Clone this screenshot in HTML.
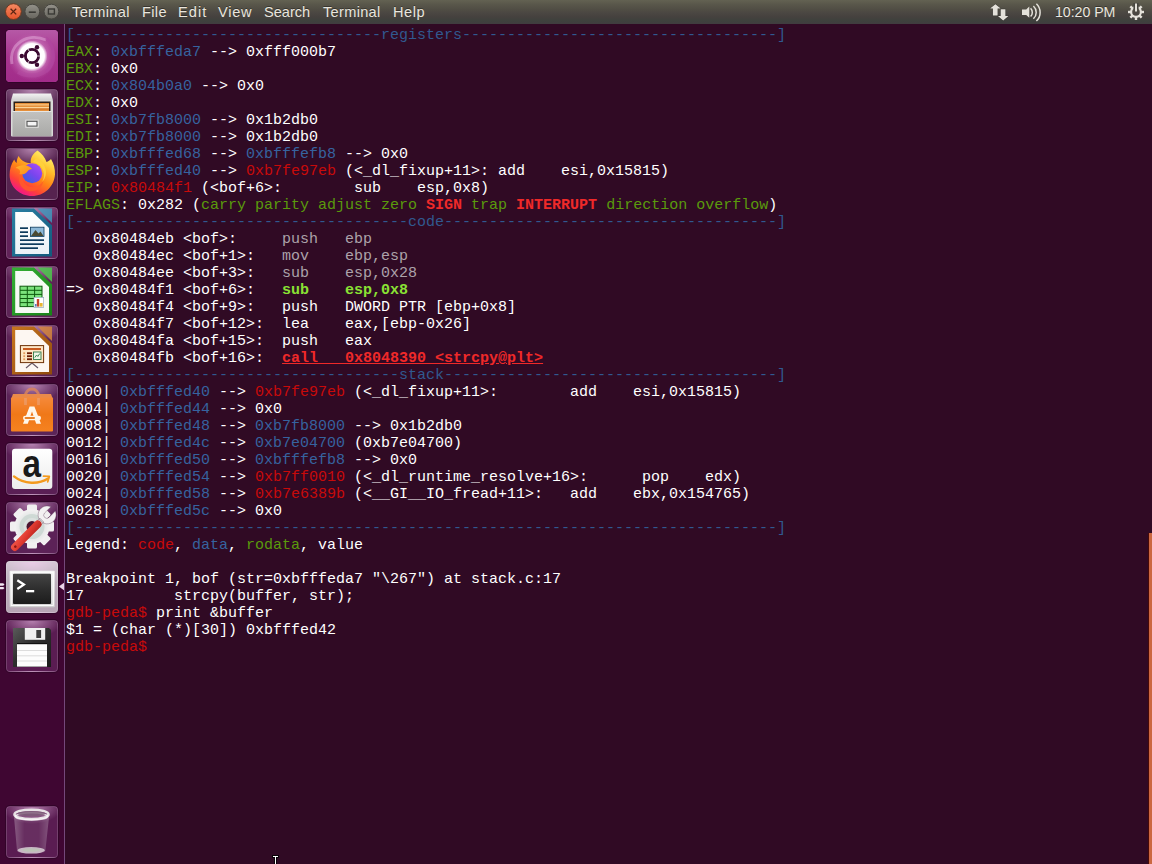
<!DOCTYPE html>
<html lang="en">
<head>
<meta charset="utf-8">
<title>Terminal</title>
<style>
*{box-sizing:border-box;margin:0;padding:0}
html,body{width:1152px;height:864px;overflow:hidden;background:#300a24}
body{position:relative;font-family:"Liberation Sans",sans-serif}
#panel{position:absolute;left:0;top:0;width:1152px;height:24px;background:linear-gradient(#636252 0%,#58564a 20%,#504d44 40%,#4a4642 55%,#45413e 70%,#3e413d 86%,#403c3f 100%);z-index:5}
#panel .m{position:absolute;top:3px;height:18px;line-height:18px;font-size:14.6px;color:#e9e6df;white-space:pre;text-shadow:0 -1px 0 rgba(0,0,0,.35)}
.wb{position:absolute;top:4px;width:16px;height:16px;border-radius:50%;border:1px solid #33322d}
#launcher{position:absolute;left:0;top:24px;width:65px;height:840px;background:#3f0632;border-right:1px solid #74487a;z-index:4}
.ic{position:absolute;left:6px;width:52px;height:52px;border-radius:4px;overflow:hidden;background:#5a2352;box-shadow:0 0 0 1px rgba(40,4,34,.55)}
.ic:before{content:"";position:absolute;left:0;top:0;right:0;bottom:0;border-radius:4px;border:1px solid rgba(255,255,255,.16);background:radial-gradient(ellipse 60% 34% at 50% 0,rgba(255,210,250,.55),rgba(255,210,250,0) 100%);z-index:0}
.ic svg{position:absolute;left:0;top:0;width:52px;height:52px;z-index:1}
#term{position:absolute;left:65px;top:24px;width:1087px;height:840px;background:#300a24;overflow:hidden}
#tx{position:absolute;left:1px;top:3px;font-family:"Liberation Mono",monospace;font-size:15px;line-height:17px;color:#fff;white-space:pre;tab-size:8;-moz-tab-size:8}
.b{color:#36639f}.g{color:#5a9a0c}.r{color:#c80a0a}.R{color:#ef2929;font-weight:bold}.G{color:#8ae234;font-weight:bold}.d{color:#aca2aa}
.u{text-decoration:underline}.s{color:#30598f}
#sb{position:absolute;left:1149px;top:533px;width:3px;height:331px;background:#cb6841;box-shadow:-1px 0 0 #470a08;z-index:6}
</style>
</head>
<body>
<div id="panel">
<svg width="66" height="24" style="position:absolute;left:0;top:0" viewBox="0 0 66 24">
<defs>
<linearGradient id="gc" x1="0" y1="0" x2="0" y2="1"><stop offset="0" stop-color="#f68a63"/><stop offset="1" stop-color="#e4532a"/></linearGradient>
<linearGradient id="gm" x1="0" y1="0" x2="0" y2="1"><stop offset="0" stop-color="#94928a"/><stop offset="1" stop-color="#67655e"/></linearGradient>
</defs>
<circle cx="13.4" cy="11.6" r="7.9" fill="url(#gc)" stroke="#6b3a22" stroke-width="1"/>
<path d="M10.6 8.8l5.6 5.6M16.2 8.8l-5.6 5.6" stroke="#5a2412" stroke-width="1.3" fill="none"/>
<circle cx="32.3" cy="11.6" r="7.4" fill="url(#gm)" stroke="#46453f" stroke-width="1"/>
<path d="M28.8 12.2h7" stroke="#3a3935" stroke-width="1.6" fill="none"/>
<circle cx="51.4" cy="11.6" r="7.4" fill="url(#gm)" stroke="#46453f" stroke-width="1"/>
<rect x="48.4" y="9" width="6" height="5" fill="none" stroke="#3a3935" stroke-width="1.4"/>
</svg>
<span class="m" style="left:72px;letter-spacing:.33px">Terminal</span>
<span class="m" style="left:142px;letter-spacing:.35px">File</span>
<span class="m" style="left:178px;letter-spacing:1.05px">Edit</span>
<span class="m" style="left:218px;letter-spacing:.75px">View</span>
<span class="m" style="left:264px">Search</span>
<span class="m" style="left:323px;letter-spacing:.3px">Terminal</span>
<span class="m" style="left:393px;letter-spacing:.5px">Help</span>
<svg width="172" height="24" style="position:absolute;left:980px;top:0" viewBox="980 0 172 24" fill="#e4e1da">
<path d="M995.400 4.200l5.300 4.300h-3.100v7.100h-4.700V8.500h-2.800z" stroke="#34332e" stroke-width=".8" paint-order="stroke"/>
<path d="M1003.200 20.600l-5.300-4.500h2.800V9.200h4.700v6.900h3z" stroke="#34332e" stroke-width=".8" paint-order="stroke"/>
<path d="M1022 9.400h4.200l3.100-3v11.400l-3.100-2.800H1022z"/>
<path d="M1030.600 8.200a6 6 0 0 1 0 8.400M1033.400 6a8.700 8.700 0 0 1 0 12.800M1036.400 3.800a11.800 11.800 0 0 1 0 17.200" fill="none" stroke="#e4e1da" stroke-width="1.500"/>
<g transform="translate(1136 12)">
<circle r="4.900" fill="none" stroke="#e4e1da" stroke-width="2.200"/>
<g stroke="#e4e1da" stroke-width="2.400"><path d="M0 -8v3" transform="rotate(45)"/><path d="M0 -8v3" transform="rotate(90)"/><path d="M0 -8v3" transform="rotate(135)"/><path d="M0 -8v3" transform="rotate(180)"/><path d="M0 -8v3" transform="rotate(225)"/><path d="M0 -8v3" transform="rotate(270)"/><path d="M0 -8v3" transform="rotate(315)"/></g>
<rect x="-2.600" y="-9" width="5.200" height="6" fill="#46453f"/>
<rect x="-1" y="-8.500" width="2" height="8" fill="#e4e1da"/>
</g>
</svg>
<span class="m" style="left:1055px;font-size:14.2px;letter-spacing:-.05px">10:20 PM</span>
</div>
<div id="launcher">
<div class="ic" style="top:6px;background:#9c2f86" id="i1"><svg viewBox="0 0 52 52">
<defs><linearGradient id="d0" x1="0" y1="0" x2="0" y2="1"><stop offset="0" stop-color="#b659a6"/><stop offset=".5" stop-color="#a8358f"/><stop offset="1" stop-color="#a22c8a"/></linearGradient>
<radialGradient id="d1" cx="50%" cy="50%" r="50%"><stop offset="0" stop-color="#f0c4e8" stop-opacity=".9"/><stop offset=".6" stop-color="#d88fcb" stop-opacity=".55"/><stop offset="1" stop-color="#c060ae" stop-opacity="0"/></radialGradient>
<radialGradient id="d2"><stop offset="0" stop-color="#fff"/><stop offset=".8" stop-color="#fff"/><stop offset="1" stop-color="#fff" stop-opacity="0"/></radialGradient></defs>
<rect width="52" height="52" fill="url(#d0)"/>
<circle cx="26" cy="27" r="24" fill="url(#d1)"/>
<path d="M6 34C2 14 22 2 40 10" fill="none" stroke="#e9b6df" stroke-width="3" opacity=".45"/>
<path d="M46 20C52 40 30 52 12 42" fill="none" stroke="#b54aa2" stroke-width="4" opacity=".55"/>
<path d="M40 8C50 16 50 34 40 42" fill="none" stroke="#b044a0" stroke-width="3" opacity=".5"/>
<circle cx="26" cy="26" r="15.500" fill="url(#d2)"/>
<circle cx="26" cy="26" r="6.600" fill="none" stroke="#3b0a31" stroke-width="2.900"/>
<g stroke="#fff" stroke-width=".8"><path d="M26 26L36 26M26 26L21 17.300M26 26L21 34.700"/></g>
<circle cx="26" cy="26" r="4.900" fill="#fff"/>
<circle cx="31" cy="17.200" r="2.200" fill="#3b0a31"/><circle cx="15.800" cy="26" r="2.200" fill="#3b0a31"/><circle cx="31" cy="34.800" r="2.200" fill="#3b0a31"/>
</svg></div>
<div class="ic" style="top:65px;background:#5e2f59"><svg viewBox="0 0 52 52">
<defs><linearGradient id="f1" x1="0" y1="0" x2="0" y2="1"><stop offset="0" stop-color="#c2c2c0"/><stop offset="1" stop-color="#a9a9a7"/></linearGradient>
<linearGradient id="f2" x1="0" y1="0" x2="0" y2="1"><stop offset="0" stop-color="#f4f4f4"/><stop offset="1" stop-color="#cfcfcf"/></linearGradient></defs>
<path d="M7 4.500h38l2 7H5z" fill="url(#f2)"/>
<rect x="5" y="11" width="42" height="36.500" rx="1" fill="#d9d9d8"/>
<rect x="7.500" y="12.500" width="37" height="10" fill="#2d2018"/>
<rect x="9" y="14" width="34" height="8.500" fill="#e58f3a"/>
<rect x="9" y="15.200" width="34" height="1.300" fill="#f8c27e"/><rect x="9" y="18" width="34" height="1.500" fill="#fbd59b"/><rect x="9" y="19.500" width="34" height="1" fill="#c96a1d"/>
<rect x="6.500" y="22" width="39" height="25" fill="url(#f1)"/>
<rect x="6.500" y="22" width="39" height="1" fill="#e6e6e4"/>
<rect x="19" y="30.500" width="14" height="8.400" rx="1" fill="#d6d6d4"/>
<rect x="21" y="32.300" width="10" height="4.800" fill="#f4f4f4" stroke="#4a4a4a" stroke-width="1"/>
</svg></div>
<div class="ic" style="top:124px;background:#56234f"><svg viewBox="0 0 52 52">
<defs><linearGradient id="x1" x1=".85" y1=".08" x2=".3" y2=".98"><stop offset="0" stop-color="#fff36b"/><stop offset=".28" stop-color="#ffc02e"/><stop offset=".55" stop-color="#ff8416"/><stop offset=".8" stop-color="#ff4138"/><stop offset="1" stop-color="#f0168a"/></linearGradient>
<linearGradient id="x2" x1=".8" y1=".1" x2=".2" y2=".9"><stop offset="0" stop-color="#a24cf5"/><stop offset=".5" stop-color="#7a45ee"/><stop offset="1" stop-color="#3b5fe3"/></linearGradient>
<linearGradient id="x3" x1="0" y1="0" x2="1" y2="1"><stop offset="0" stop-color="#ffb42a"/><stop offset="1" stop-color="#ff8a1a"/></linearGradient></defs>
<path d="M31.500 2.400C36 5.500 39 9.500 40.500 14c1.800-.8 3.200-1.600 4.500-3 3 5 4.200 10 4 15.500C48 39 38 48 26 48S3.600 39 3.600 27c0-6 1.600-11 4.600-15.500 .6 1.600 1.400 2.600 2.400 3.400C10.800 12 11.400 10 12.600 8c1.400 2.600 3 4.200 5.400 5.400 2 1 4.200 1.600 6.800 1.800C24 10 27 5.500 31.500 2.400z" fill="url(#x1)"/>
<circle cx="26.200" cy="25.200" r="10" fill="url(#x2)"/>
<path d="M9.500 20c3-2.600 7-3.200 10.500-2.600 2.600.5 4.500 1.800 6 3.600-2 .2-3.600 1-4.600 2.400-1.800 2.400-4.800 3.400-8 2.600 1-1.400 1-2.800.2-4-1-1.200-2.400-1.800-4.100-2z" fill="url(#x3)"/>
<path d="M16.500 27.500c-1 5 2.500 10.500 8.500 11.500 5.500.8 10.500-2 12.500-7-1 8-8 12.500-15 11-7-1.600-11-8-9-15.500z" fill="#ff5a2a" opacity=".85"/>
<path d="M27 14c5 1 9 4.500 10.500 9.500 1 4 .4 7.500-1.500 10.500 4-4 5-10 3-15-1.600-4-5-7-9-8.500-1.200 1-2.200 2.200-3 3.500z" fill="#ffd23c" opacity=".9"/>
</svg></div>
<div class="ic" style="top:183px;background:#612258"><svg viewBox="0 0 52 52">
<defs><linearGradient id="w1" x1="0" y1="0" x2="1" y2="1"><stop offset="0" stop-color="#2b7fa3"/><stop offset="1" stop-color="#125a7c"/></linearGradient>
<linearGradient id="pg" x1="0" y1="0" x2="0" y2="1"><stop offset="0" stop-color="#fff"/><stop offset="1" stop-color="#eaf1f6"/></linearGradient></defs>
<path d="M6 1.500h22L46 18.500V49.500H6z" fill="url(#w1)"/>
<path d="M31.500 1.500H46V16z" fill="#3f9cc0" opacity=".8"/>
<path d="M9.200 5h17.300L43 21V47H9.200z" fill="url(#pg)"/>
<g fill="#0c3a5c"><rect x="14" y="20.300" width="8" height="1.700"/><rect x="14" y="24.300" width="8" height="1.700"/><rect x="14" y="28.300" width="8" height="1.700"/><rect x="14" y="32.300" width="24" height="1.700"/><rect x="14" y="36.300" width="24" height="1.700"/><rect x="14" y="40.300" width="18" height="1.700"/></g>
<rect x="24.400" y="20.200" width="13.600" height="9.300" fill="#8db9d8" stroke="#0c3a5c" stroke-width=".8"/>
<path d="M25 29l4.500-6 3 3.500 2-2 3 4.500z" fill="#4a4a32"/>
</svg></div>
<div class="ic" style="top:242px;background:#5d2456"><svg viewBox="0 0 52 52">
<defs><linearGradient id="c1" x1="0" y1="0" x2="1" y2="1"><stop offset="0" stop-color="#35b035"/><stop offset="1" stop-color="#178317"/></linearGradient></defs>
<path d="M6 1.500h22L46 18.500V49.500H6z" fill="url(#c1)"/>
<path d="M31.500 1.500H46V16z" fill="#4cc84c" opacity=".85"/>
<path d="M9.200 5h17.300L43 21V47H9.200z" fill="#f6fbf4"/>
<rect x="14" y="20.200" width="22" height="20.400" fill="#7be27b" stroke="#0e5a0e" stroke-width="1"/>
<path d="M14 24.300h22M14 28.400h22M14 32.500h22M14 36.600h22M21.300 20.200v20.400M28.600 20.200v20.400" stroke="#0e5a0e" stroke-width="1" fill="none"/>
<rect x="28" y="31.300" width="9.700" height="10" fill="#fff" stroke="#8aa0b8" stroke-width=".6"/>
<rect x="30.800" y="33" width="2.400" height="7.600" fill="#c8452a"/><rect x="33.600" y="37" width="3" height="3.600" fill="#e6b530"/><rect x="29" y="38" width="1.600" height="2.600" fill="#5a7ab8"/>
</svg></div>
<div class="ic" style="top:301px;background:#5d2456"><svg viewBox="0 0 52 52">
<defs><linearGradient id="p1" x1="0" y1="0" x2="1" y2="1"><stop offset="0" stop-color="#c8761f"/><stop offset="1" stop-color="#8f4a0c"/></linearGradient></defs>
<path d="M6 1.500h22L46 18.500V49.500H6z" fill="url(#p1)"/>
<path d="M31.500 1.500H46V16z" fill="#d98a3a" opacity=".8"/>
<path d="M9.200 5h17.300L43 21V47H9.200z" fill="#fdf7f2"/>
<path d="M26 38l-6 5M26 38l6 5" stroke="#6a5a66" stroke-width="1.200" fill="none"/>
<rect x="14.400" y="20.600" width="23.200" height="17" fill="#fde6c6" stroke="#6e3208" stroke-width="1"/>
<rect x="17" y="23" width="18" height="2" fill="#c85a1e"/>
<g fill="#6e1e06"><rect x="21" y="27.300" width="5" height="1.800"/><rect x="21" y="30.300" width="5" height="1.800"/><rect x="21" y="33.300" width="5" height="1.800"/></g>
<g fill="#e39a5a"><rect x="17.300" y="27.300" width="1.800" height="1.800"/><rect x="17.300" y="30.300" width="1.800" height="1.800"/><rect x="17.300" y="33.300" width="1.800" height="1.800"/></g>
<rect x="27.500" y="27" width="7.500" height="7.500" fill="#eef6e6" stroke="#2f7a4a" stroke-width=".9"/>
<path d="M28.800 32.500l1.800-2.500 1.200 1.500 2-3" stroke="#2f7a4a" stroke-width=".9" fill="none"/>
</svg></div>
<div class="ic" style="top:360px;background:#5b2458"><svg viewBox="0 0 52 52">
<defs><linearGradient id="s1" x1="0" y1="0" x2="0" y2="1"><stop offset="0" stop-color="#f5893a"/><stop offset=".5" stop-color="#f07818"/><stop offset="1" stop-color="#f58220"/></linearGradient></defs>
<path d="M19.500 16V11.500a6.500 6.500 0 0 1 13 0v4.500" fill="none" stroke="#d8845e" stroke-width="2.800" opacity=".85"/>
<path d="M7 10h38l1.500 4h-41z" fill="#e98a4a"/>
<rect x="5" y="13.500" width="42" height="34" rx="1" fill="url(#s1)"/>
<path d="M19.500 21v-7M32.500 21v-7" stroke="#eaa47c" stroke-width="2.800" opacity=".6"/>
<path d="M17 39.800L23.600 22.400h4.800L35 39.800h-4.800L26 27.500 21.800 39.800z" fill="#fff7ea"/>
<rect x="17" y="31.800" width="18" height="4.400" rx="2.200" fill="#fff7ea"/>
<rect x="18.600" y="33.100" width="10.400" height="1.900" rx=".9" fill="#e8842c"/>
</svg></div>
<div class="ic" style="top:419px;background:#5a1f55"><svg viewBox="0 0 52 52">
<defs><linearGradient id="a1" x1="0" y1="0" x2="0" y2="1"><stop offset="0" stop-color="#ffffff"/><stop offset="1" stop-color="#ececec"/></linearGradient></defs>
<rect x="6" y="5.700" width="40.300" height="40.400" rx="3" fill="url(#a1)"/>
<text x="25.800" y="33.700" text-anchor="middle" font-family="Liberation Sans,sans-serif" font-weight="bold" font-size="39.500" fill="#1a1a1a" textLength="18.500" lengthAdjust="spacingAndGlyphs">a</text>
<path d="M8 33.400C18 41.500 33 41.500 42 35.500" fill="none" stroke="#f39a1e" stroke-width="2.400" stroke-linecap="round"/>
<path d="M37.500 33.200l5.800.2-1.600 5.400" fill="none" stroke="#f39a1e" stroke-width="1.800" stroke-linecap="round" stroke-linejoin="round"/>
</svg></div>
<div class="ic" style="top:478px;background:#5c2257"><svg viewBox="0 0 52 52">
<defs><radialGradient id="g1" cx=".5" cy=".5" r=".5"><stop offset="0" stop-color="#cfdad6"/><stop offset=".55" stop-color="#dfe3e2"/><stop offset="1" stop-color="#f4f2f3"/></radialGradient>
<linearGradient id="g2" x1="0" y1="0" x2="1" y2="1"><stop offset="0" stop-color="#f0574a"/><stop offset=".5" stop-color="#e03a30"/><stop offset="1" stop-color="#b8241e"/></linearGradient></defs>
<g transform="translate(26 24.600)"><g fill="#f1eff0">
<rect x="-5" y="-22" width="10" height="44" rx="1.500"/><rect x="-5" y="-22" width="10" height="44" rx="1.500" transform="rotate(45)"/><rect x="-5" y="-22" width="10" height="44" rx="1.500" transform="rotate(90)"/><rect x="-5" y="-22" width="10" height="44" rx="1.500" transform="rotate(135)"/></g>
<circle r="17.500" fill="url(#g1)"/><circle r="10.500" fill="none" stroke="#c9d6d1" stroke-width="4" opacity=".8"/><circle r="5.500" fill="#4a1430"/></g>
<g transform="rotate(-45 21 33)">
<path d="M57.9 29.9A9 9 0 1 0 57.9 36.1L49.0 36.1A3.1 3.1 0 0 1 49.0 29.9ZM36 30.200h6v5.600h-6z" fill="#f3f1f2" stroke="#6a4a62" stroke-width=".7" stroke-opacity=".55"/>
<rect x="0" y="29.200" width="40" height="7.600" rx="3.800" fill="url(#g2)"/><circle cx="4.500" cy="33" r="1.300" fill="#8a1510"/></g>
</svg></div>
<div class="ic" style="top:537px;background:linear-gradient(#d0c6d0,#bcaebb 45%,#b7a5b5)"><svg viewBox="0 0 52 52">
<defs><linearGradient id="t1" x1="0" y1="0" x2="0" y2="1"><stop offset="0" stop-color="#454545"/><stop offset=".5" stop-color="#2e2e2e"/><stop offset="1" stop-color="#1c1c1c"/></linearGradient>
<linearGradient id="t2" x1="0" y1="0" x2="0" y2="1"><stop offset="0" stop-color="#f2f2f2"/><stop offset="1" stop-color="#cfcfcf"/></linearGradient></defs>
<rect x="3.600" y="9.800" width="45.200" height="36.400" rx="1" fill="url(#t2)"/>
<rect x="5.200" y="11.200" width="42" height="33.200" fill="none" stroke="#fff" stroke-width="1"/>
<rect x="7" y="12.800" width="38" height="30.200" rx="1" fill="url(#t1)"/>
<path d="M11.300 19.200l6.600 4.400-6.600 4.400" fill="none" stroke="#fff" stroke-width="2.300"/>
<rect x="20" y="29" width="8.200" height="2.300" fill="#fff"/>
</svg></div>
<svg width="66" height="20" viewBox="0 0 66 20" style="position:absolute;left:0;top:553px">
<path d="M0 6.300h3.200l1.300 1.200-1.300 1.200H0zM0 9.900h3.200l1.300 1.200-1.300 1.200H0z" fill="#f3e6f2"/>
<path d="M64 5.700v7.600L58.800 9.500z" fill="#e9d3e6"/>
</svg>
<div class="ic" style="top:596px;background:#5a1c52"><svg viewBox="0 0 52 52">
<defs><linearGradient id="y1" x1="0" y1="0" x2="1" y2="1"><stop offset="0" stop-color="#5a5a5a"/><stop offset=".45" stop-color="#2e2e2e"/><stop offset="1" stop-color="#1a1a1a"/></linearGradient></defs>
<path d="M7 8h36l2 2v37H7z" fill="url(#y1)"/>
<rect x="18.800" y="8" width="20.400" height="11.800" fill="#efefef"/>
<rect x="30.300" y="10" width="4.800" height="8" fill="#3c3c3c"/>
<rect x="11" y="23.900" width="30" height="22.700" fill="#fdfdfd"/>
<rect x="11" y="23" width="30" height="1.200" fill="#111"/>
<path d="M11 30.500h30M11 35.800h30M11 41h30" stroke="#d4d4d4" stroke-width=".8"/>
</svg></div>
<div class="ic" style="top:782px;background:#5a1c52"><svg viewBox="0 0 52 52">
<defs><linearGradient id="r1" x1="0" y1="0" x2="1" y2="0"><stop offset="0" stop-color="#fff" stop-opacity=".28"/><stop offset=".3" stop-color="#fff" stop-opacity=".08"/><stop offset=".7" stop-color="#fff" stop-opacity=".08"/><stop offset="1" stop-color="#fff" stop-opacity=".25"/></linearGradient></defs>
<path d="M7.800 8.400L11 44.400a14.200 3.500 0 0 0 28.400 0L43.300 8.400z" fill="url(#r1)"/>
<ellipse cx="25.200" cy="44.300" rx="13.600" ry="3.300" fill="#d9cfd6" opacity=".85"/>
<ellipse cx="25.200" cy="44" rx="9" ry="1.800" fill="#b9c8b4" opacity=".7"/>
<ellipse cx="25.500" cy="8.400" rx="17" ry="4.700" fill="none" stroke="#e8e2e6" stroke-width="2.600"/>
<ellipse cx="25.500" cy="10.400" rx="16" ry="3.600" fill="none" stroke="#fff" stroke-width="1.600" opacity=".7"/>
<ellipse cx="25.500" cy="7.600" rx="14" ry="2.600" fill="#7a5a76" opacity=".8"/>
</svg></div>
</div>
<div id="term"><div id="tx"><span class="s">[----------------------------------registers-----------------------------------]</span>
<span class="g">EAX</span>: <span class="b">0xbfffeda7</span> --&gt; 0xfff000b7
<span class="g">EBX</span>: 0x0
<span class="g">ECX</span>: <span class="b">0x804b0a0</span> --&gt; 0x0
<span class="g">EDX</span>: 0x0
<span class="g">ESI</span>: <span class="b">0xb7fb8000</span> --&gt; 0x1b2db0
<span class="g">EDI</span>: <span class="b">0xb7fb8000</span> --&gt; 0x1b2db0
<span class="g">EBP</span>: <span class="b">0xbfffed68</span> --&gt; <span class="b">0xbfffefb8</span> --&gt; 0x0
<span class="g">ESP</span>: <span class="b">0xbfffed40</span> --&gt; <span class="r">0xb7fe97eb</span> (&lt;_dl_fixup+11&gt;:	add    esi,0x15815)
<span class="g">EIP</span>: <span class="r">0x80484f1</span> (&lt;bof+6&gt;:	sub    esp,0x8)
<span class="g">EFLAGS</span>: 0x282 (<span class="g">carry parity adjust zero </span><span class="R">SIGN</span><span class="g"> trap </span><span class="R">INTERRUPT</span><span class="g"> direction overflow</span>)
<span class="s">[-------------------------------------code-------------------------------------]</span>
   0x80484eb &lt;bof&gt;:	<span class="d">push   ebp</span>
   0x80484ec &lt;bof+1&gt;:	<span class="d">mov    ebp,esp</span>
   0x80484ee &lt;bof+3&gt;:	<span class="d">sub    esp,0x28</span>
=&gt; 0x80484f1 &lt;bof+6&gt;:	<span class="G">sub    esp,0x8</span>
   0x80484f4 &lt;bof+9&gt;:	push   DWORD PTR [ebp+0x8]
   0x80484f7 &lt;bof+12&gt;:	lea    eax,[ebp-0x26]
   0x80484fa &lt;bof+15&gt;:	push   eax
   0x80484fb &lt;bof+16&gt;:	<span class="R u">call   0x8048390 &lt;strcpy@plt&gt;</span>
<span class="s">[------------------------------------stack-------------------------------------]</span>
0000| <span class="b">0xbfffed40</span> --&gt; <span class="r">0xb7fe97eb</span> (&lt;_dl_fixup+11&gt;:	add    esi,0x15815)
0004| <span class="b">0xbfffed44</span> --&gt; 0x0
0008| <span class="b">0xbfffed48</span> --&gt; <span class="b">0xb7fb8000</span> --&gt; 0x1b2db0
0012| <span class="b">0xbfffed4c</span> --&gt; <span class="b">0xb7e04700</span> (0xb7e04700)
0016| <span class="b">0xbfffed50</span> --&gt; <span class="b">0xbfffefb8</span> --&gt; 0x0
0020| <span class="b">0xbfffed54</span> --&gt; <span class="r">0xb7ff0010</span> (&lt;_dl_runtime_resolve+16&gt;:	pop    edx)
0024| <span class="b">0xbfffed58</span> --&gt; <span class="r">0xb7e6389b</span> (&lt;__GI__IO_fread+11&gt;:	add    ebx,0x154765)
0028| <span class="b">0xbfffed5c</span> --&gt; 0x0
<span class="s">[------------------------------------------------------------------------------]</span>
Legend: <span class="r">code</span>, <span class="b">data</span>, <span class="g">rodata</span>, value

Breakpoint 1, bof (str=0xbfffeda7 "\267") at stack.c:17
17	    strcpy(buffer, str);
<span class="r">gdb-peda$ </span>print &amp;buffer
$1 = (char (*)[30]) 0xbfffed42
<span class="r">gdb-peda$ </span></div></div>
<div id="sb"></div>
<svg width="9" height="10" viewBox="0 0 9 10" style="position:absolute;left:271px;top:854px;z-index:7"><path d="M1 1h7v3H6v6H3V4H1z" fill="#0a0208"/><path d="M2 2h5v1H5v7H4V3H2z" fill="#fff"/></svg>
</body>
</html>
